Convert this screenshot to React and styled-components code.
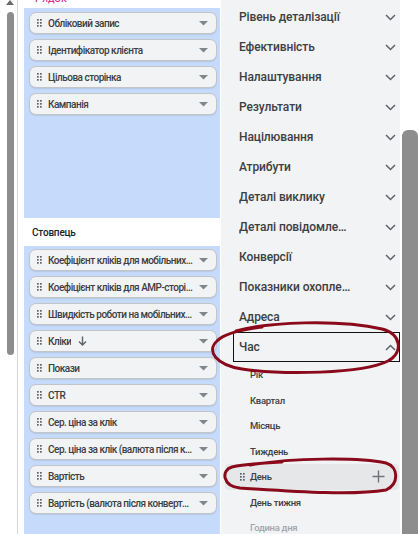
import React from 'react';
import styled, {createGlobalStyle} from 'styled-components';

const ROW_FIELDS = [
  {id: 1, name: 'Обліковий запис'},
  {id: 2, name: 'Ідентифікатор клієнта'},
  {id: 3, name: 'Цільова сторінка'},
  {id: 4, name: 'Кампанія'},
];

const COLUMN_FIELDS = [
  {id: 1, name: 'Коефіцієнт кліків для мобільних пристроїв'},
  {id: 2, name: 'Коефіцієнт кліків для AMP-сторінок'},
  {id: 3, name: 'Швидкість роботи на мобільних пристроях'},
  {id: 4, name: 'Кліки', sorted: true},
  {id: 5, name: 'Покази'},
  {id: 6, name: 'CTR'},
  {id: 7, name: 'Сер. ціна за клік'},
  {id: 8, name: 'Сер. ціна за клік (валюта після конвертації)'},
  {id: 9, name: 'Вартість'},
  {id: 10, name: 'Вартість (валюта після конвертації)'},
];

const GROUPS = [
  'Рівень деталізації',
  'Ефективність',
  'Налаштування',
  'Результати',
  'Націлювання',
  'Атрибути',
  'Деталі виклику',
  'Деталі повідомлень',
  'Конверсії',
  'Показники охоплення',
  'Адреса',
];

const TIME_FIELDS = [
  {id: 'year', name: 'Рік'},
  {id: 'quarter', name: 'Квартал'},
  {id: 'month', name: 'Місяць'},
  {id: 'week', name: 'Тиждень'},
  {id: 'day', name: 'День', hovered: true},
  {id: 'weekday', name: 'День тижня'},
  {id: 'hour', name: 'Година дня', disabled: true},
];

const GlobalStyle = createGlobalStyle`
  html, body {
    margin: 0;
    padding: 0;
    background: #ffffff;
  }
  body {
    font-family: Roboto, "Noto Sans", Arial, sans-serif;
  }
`;

const DragHandle = () => (
    <svg width="6" height="8" viewBox="0 0 6 8">
      {[1, 4].map((x) =>
          [1, 4, 7].map((y) => (
              <rect key={`${x}-${y}`} x={x - 1} y={y - 1} width="1.7"
                    height="1.7" fill="#5f6368"/>
          ))
      )}
    </svg>
);

const DropTriangle = () => (
    <svg width="9" height="5" viewBox="0 0 9 5">
      <path d="M0 0 L9 0 L4.5 4.5 Z" fill="#80868b"/>
    </svg>
);

const SortArrow = () => (
    <svg width="9" height="10" viewBox="0 0 9 10">
      <path d="M4.5 0.5 V9 M1 5.5 L4.5 9 L8 5.5" fill="none"
            stroke="#5f6368" strokeWidth="1.4"/>
    </svg>
);

const Chevron = ({up}) => (
    <svg width="11" height="7" viewBox="0 0 11 7">
      <path d={up ? 'M1 6 L5.5 1.5 L10 6' : 'M1 1 L5.5 5.5 L10 1'}
            fill="none" stroke="#5f6368" strokeWidth="1.5"/>
    </svg>
);

const Plus = () => (
    <svg width="13" height="13" viewBox="0 0 13 13">
      <path d="M6.5 0.5 V12.5 M0.5 6.5 H12.5" fill="none" stroke="#6f7378"
            strokeWidth="1.4"/>
    </svg>
);

const FieldChip = ({name, sorted}) => (
    <Chip>
      <DragHandle/>
      <ChipLabel $grow={!sorted}>{name}</ChipLabel>
      {sorted && <SortIcon><SortArrow/></SortIcon>}
      {sorted && <Spacer/>}
      <DropTriangle/>
    </Chip>
);

const App = () => {
  return (
      <>
        <GlobalStyle/>
        <Page>
          <PageScroll>
            <UpArrow/>
            <PageThumb/>
          </PageScroll>

          <Layout>
            <RowHeader>
              <RowLabel>Рядок</RowLabel>
            </RowHeader>
            <DropZone $height={210} $top={4}>
              {ROW_FIELDS.map((field) => (
                  <FieldChip key={field.id} name={field.name}/>
              ))}
            </DropZone>
            <SectionTitle>Стовпець</SectionTitle>
            <DropZone $top={3}>
              {COLUMN_FIELDS.map((field) => (
                  <FieldChip key={field.id} name={field.name}
                             sorted={field.sorted}/>
              ))}
            </DropZone>
          </Layout>

          <Catalog>
            {GROUPS.map((group) => (
                <GroupRow key={group}>
                  <GroupName>{group}</GroupName>
                  <Chevron/>
                </GroupRow>
            ))}
            <GroupRow $focused>
              <GroupName>Час</GroupName>
              <Chevron up/>
            </GroupRow>
            {TIME_FIELDS.map((field) => (
                <FieldRow key={field.id} $hovered={field.hovered}>
                  <HandleSlot>{field.hovered && <DragHandle/>}</HandleSlot>
                  <FieldName $disabled={field.disabled}>{field.name}</FieldName>
                  {field.hovered && <AddButton><Plus/></AddButton>}
                </FieldRow>
            ))}
          </Catalog>

          <CatalogScroll>
            <CatalogThumb/>
          </CatalogScroll>

          {/* hand-drawn highlight loops */}
          <Marks width="418" height="534" viewBox="0 0 418 534">
            <path
                d="M236 331 C268 322 338 319 382 329 C401 334 404 352 388 361 C362 374 282 375 242 369 C216 365 206 351 217 341 C224 334 238 330 262 327"
                fill="none" stroke="#8a0a1c" strokeWidth="3"
                strokeLinecap="round"/>
            <path
                d="M250 465 C290 458 358 457 386 463 C399 467 399 484 386 490 C350 496 288 491 240 488 C222 486 221 470 232 467 C246 464 266 463 282 462"
                fill="none" stroke="#8a0a1c" strokeWidth="3"
                strokeLinecap="round"/>
          </Marks>
        </Page>
      </>
  );
};

export default App;

const Page = styled.div`
  position: relative;
  display: flex;
  width: 418px;
  height: 534px;
  overflow: hidden;
  background: #ffffff;
`;

const PageScroll = styled.div`
  position: relative;
  flex: 0 0 17px;
  border-right: 1px solid #d6d6d6;
  background: #ffffff;
`;

const UpArrow = styled.div`
  position: absolute;
  top: 0;
  left: 6px;
  width: 0;
  height: 0;
  border-left: 4px solid transparent;
  border-right: 4px solid transparent;
  border-bottom: 5px solid #6a6a6a;
`;

const PageThumb = styled.div`
  position: absolute;
  top: 12px;
  left: 7px;
  width: 7px;
  height: 343px;
  border-radius: 4px;
  background: #8d8d8d;
`;

const Layout = styled.div`
  display: flex;
  flex-direction: column;
  flex: 0 0 196px;
  min-width: 0;
  margin-left: 6px;
`;

const RowHeader = styled.div`
  flex: 0 0 8px;
  height: 8px;
  padding-left: 11px;
  overflow: hidden;
  background: #ffffff;
`;

const RowLabel = styled.div`
  margin-top: -8px;
  font-size: 11px;
  line-height: 14px;
  color: #d01884;
`;

const DropZone = styled.div`
  display: flex;
  flex-direction: column;
  gap: 5px;
  box-sizing: border-box;
  min-height: 0;
  flex: ${({$height}) => ($height ? `0 0 ${$height}px` : '1 1 0')};
  padding: ${({$top}) => $top}px 3px 0 5px;
  background: #c6dafc;
`;

const SectionTitle = styled.div`
  display: flex;
  align-items: center;
  flex: 0 0 28px;
  padding-left: 8px;
  font-size: 10px;
  font-weight: 500;
  letter-spacing: -0.2px;
  color: #202124;
  background: #ffffff;
`;

const Chip = styled.div`
  display: flex;
  align-items: center;
  flex-shrink: 0;
  box-sizing: border-box;
  min-width: 0;
  height: 22px;
  padding: 0 8px 0 7px;
  border: 1px solid #c2c4c6;
  border-radius: 7px;
  background: #f1f3f4;
  box-shadow: 0 1px 1px rgba(60, 64, 67, 0.12);
`;

const ChipLabel = styled.span`
  flex: ${({$grow}) => ($grow ? '1' : '0 1 auto')};
  min-width: 0;
  margin: 0 6px 0 5px;
  overflow: hidden;
  white-space: nowrap;
  text-overflow: ellipsis;
  font-size: 10px;
  font-weight: 500;
  letter-spacing: -0.5px;
  color: #3c4043;
`;

const SortIcon = styled.span`
  display: flex;
  margin-left: 1px;
`;

const Spacer = styled.span`
  flex: 1;
`;

const Catalog = styled.div`
  display: flex;
  flex-direction: column;
  flex: 0 0 179px;
  min-width: 0;
  box-sizing: border-box;
  margin-left: 1px;
  padding-top: 2px;
  background: #f1f3f4;
`;

const GroupRow = styled.div`
  display: flex;
  align-items: center;
  flex-shrink: 0;
  box-sizing: border-box;
  min-width: 0;
  height: 30px;
  margin-left: 12px;
  padding: 0 3px 0 5px;
  border: 1px solid ${({$focused}) => ($focused ? '#111111' : 'transparent')};
`;

const GroupName = styled.span`
  flex: 1;
  min-width: 0;
  overflow: hidden;
  white-space: nowrap;
  text-overflow: ellipsis;
  padding-right: 34px;
  font-size: 12px;
  font-weight: 500;
  letter-spacing: -0.1px;
  color: #3c4043;
`;

const FieldRow = styled.div`
  display: flex;
  align-items: center;
  flex-shrink: 0;
  height: 25.5px;
  margin: 0 1px 0 4px;
  padding-left: 15px;
  padding-right: 14px;
  border-radius: 4px;
  background: ${({$hovered}) => ($hovered ? '#e6e7e9' : 'transparent')};
`;

const HandleSlot = styled.span`
  display: flex;
  width: 6px;
  margin-right: 4px;
`;

const FieldName = styled.span`
  flex: 1;
  font-size: 9.5px;
  font-weight: 500;
  letter-spacing: -0.3px;
  color: ${({$disabled}) => ($disabled ? '#a3a7ab' : '#3c4043')};
`;

const AddButton = styled.span`
  display: flex;
`;

const CatalogScroll = styled.div`
  position: relative;
  flex: 1;
  background: #ffffff;
`;

const CatalogThumb = styled.div`
  position: absolute;
  top: 130px;
  left: 2px;
  right: 0;
  bottom: 0;
  border-radius: 6px 6px 0 0;
  background: #8d8d8d;
`;

const Marks = styled.svg`
  position: absolute;
  inset: 0;
  pointer-events: none;
`;
